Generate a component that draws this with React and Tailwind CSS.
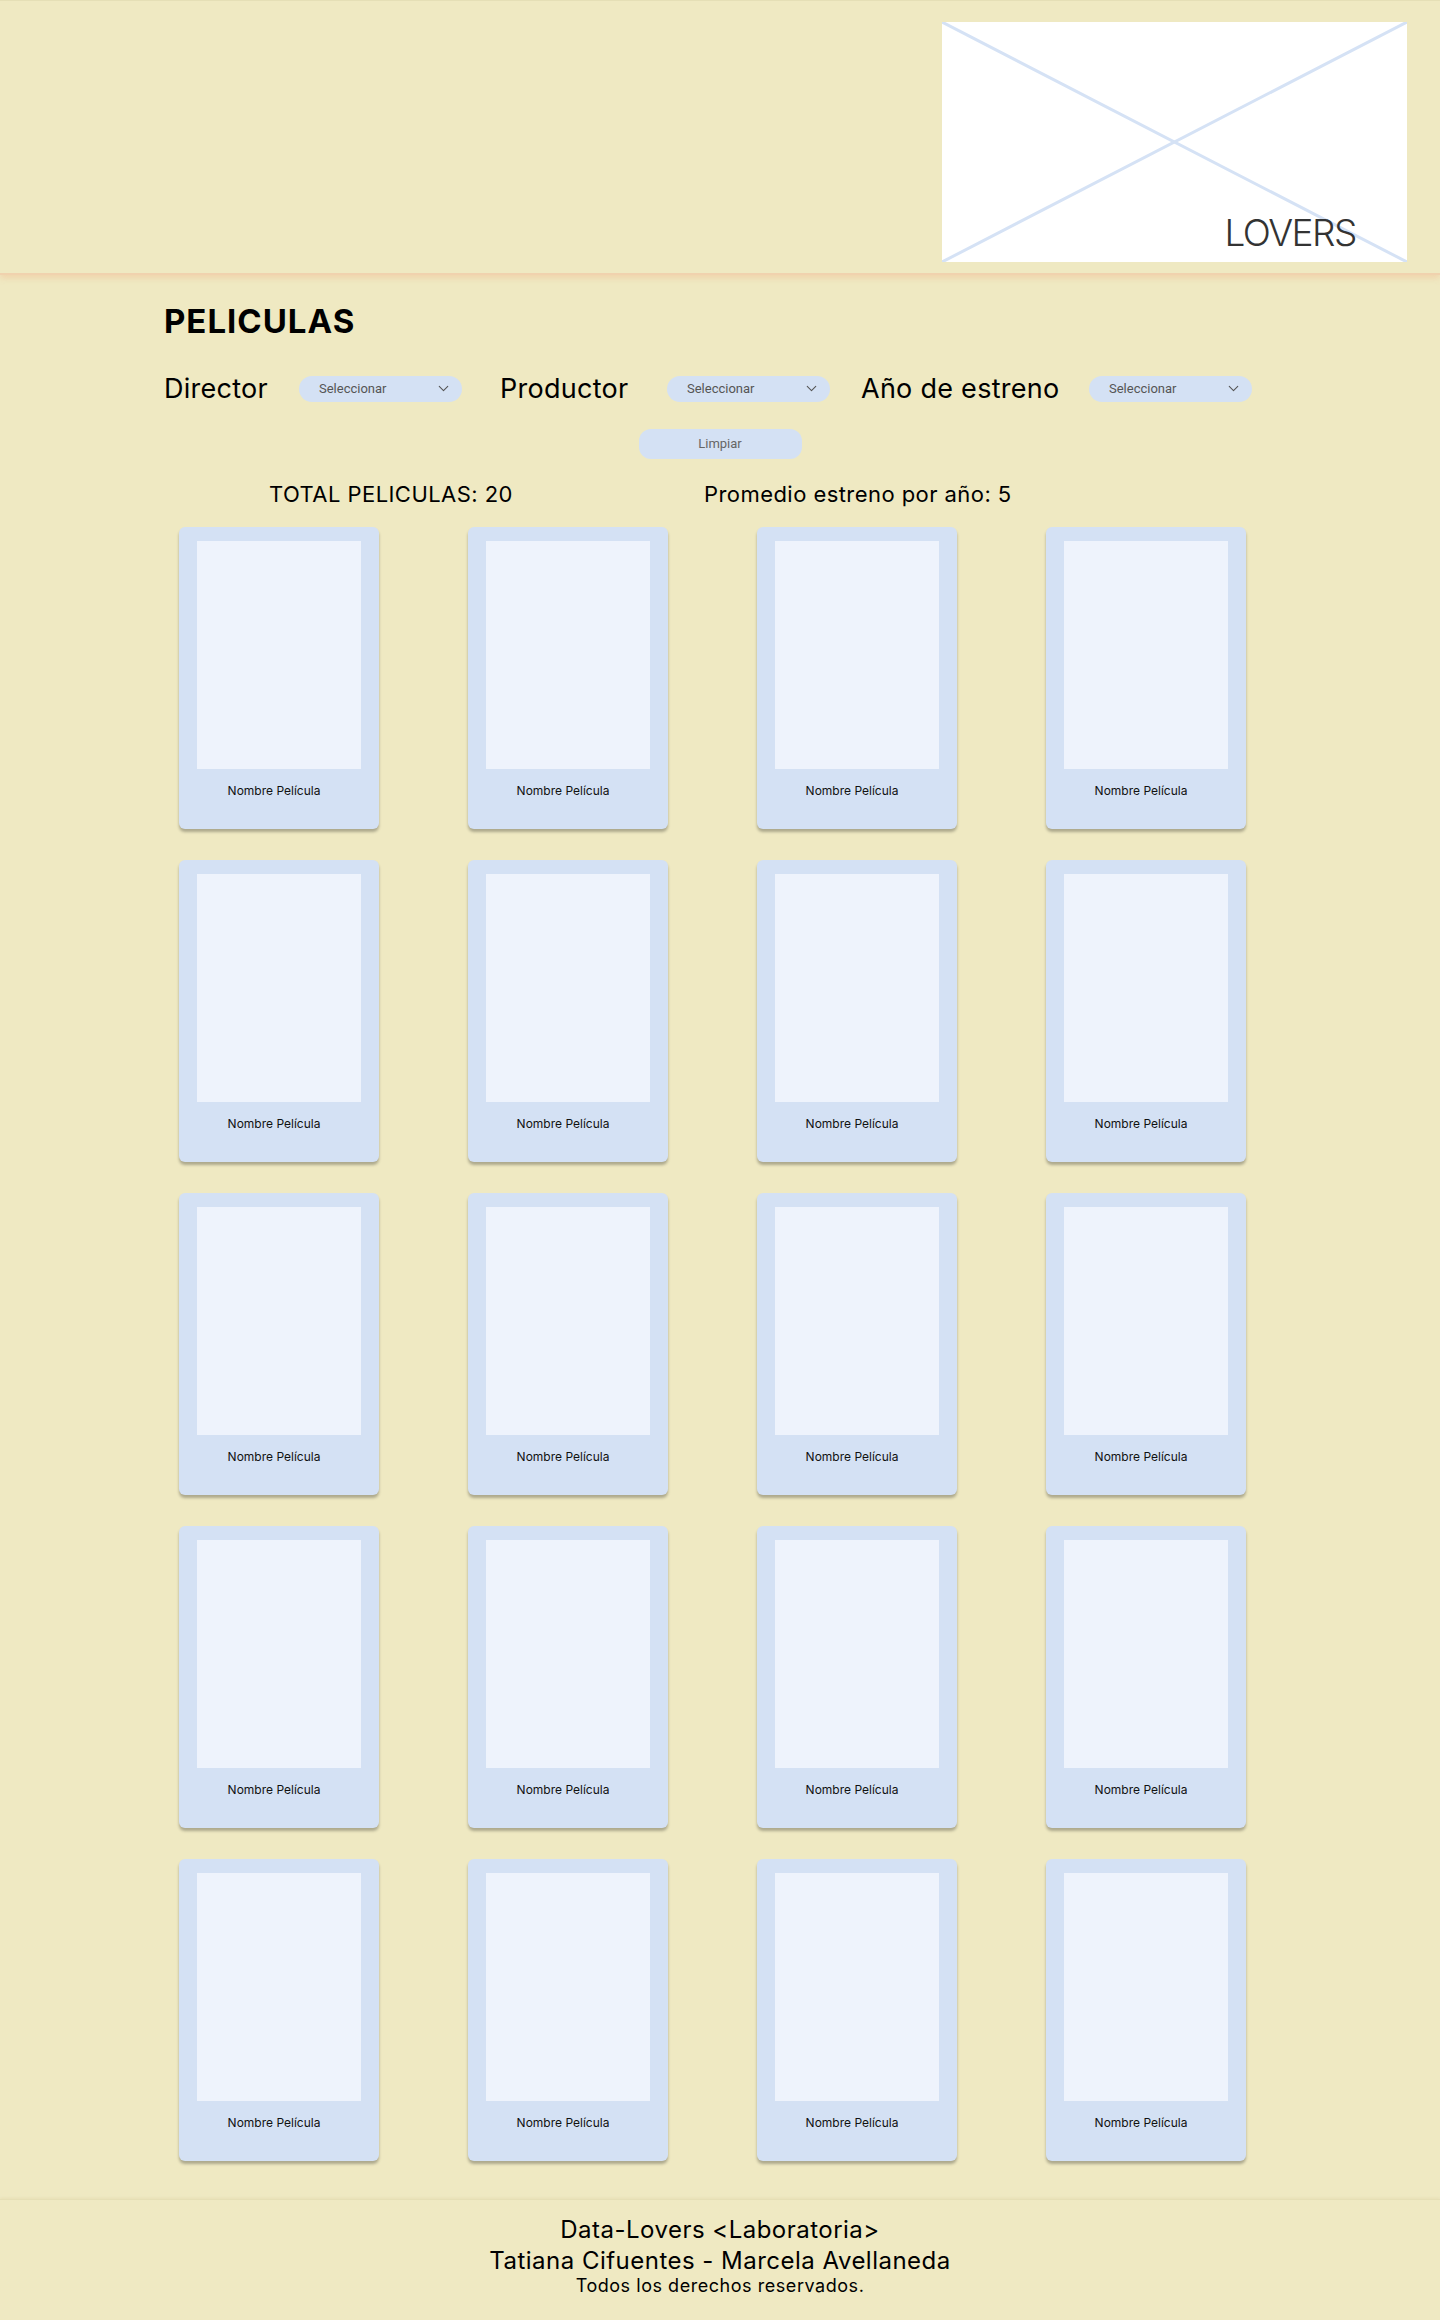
import React from 'react';
import { ChevronDown } from 'lucide-react';

// label widths keep the selects where the mockup has them
const FILTERS = [
  { label: 'Director', width: 'w-[135px]', gap: '' },
  { label: 'Productor', width: 'w-[167px]', gap: 'ml-[38px]' },
  { label: 'Año de estreno', width: 'w-[228px]', gap: 'ml-[31px]' },
];

function Select() {
  return (
    <div className="flex items-center justify-between w-[163px] h-[26px] rounded-full bg-[#d4e1f4] pl-[20px] pr-[10px] font-['Roboto',sans-serif] text-[13px] text-[#555]">
      <span>Seleccionar</span>
      <ChevronDown size={17} strokeWidth={1.5} className="text-[#555]" />
    </div>
  );
}

function MovieCard() {
  return (
    <div className="w-[200px] h-[302px] rounded-md bg-[#d4e1f4] shadow-[0_3px_3px_rgba(0,0,0,0.28)] pt-[14px] px-[18px]">
      <div className="h-[228px] bg-[#eef3fc]" />
      <p className="mt-[14px] text-center text-[12px] leading-4 text-[#111] pr-[10px]">
        Nombre Película
      </p>
    </div>
  );
}

export default function App() {
  const movies = Array.from({ length: 20 });

  return (
    <div className="min-h-[2320px] bg-[#efe9c2] font-['Inter',sans-serif] text-black flex flex-col">
      {/* header */}
      <header className="relative z-10 h-[275px] bg-[#efe9c2] border-t border-[#e5dfb6] border-b-2 border-b-[#f0d2ae] shadow-[0_3px_6px_rgba(240,205,165,0.8)] flex justify-end items-start pt-[21px] pr-[33px]">
        <div className="relative w-[465px] h-[240px] bg-white">
          <svg className="absolute inset-0 w-full h-full" viewBox="0 0 465 240" preserveAspectRatio="none">
            <line x1="0" y1="0" x2="465" y2="240" stroke="#d5e2f5" strokeWidth="3" />
            <line x1="465" y1="0" x2="0" y2="240" stroke="#d5e2f5" strokeWidth="3" />
          </svg>
          <span className="absolute right-[51px] bottom-[11px] text-[37px] leading-none tracking-[-0.04em] font-light text-[#333]">
            LOVERS
          </span>
        </div>
      </header>

      {/* main */}
      <main className="flex-1 pt-[30px]">
        <h1 className="ml-[164px] text-[33px] leading-none font-bold tracking-[0.03em]">PELICULAS</h1>

        <div className="mt-[37px] ml-[164px] flex items-center">
          {FILTERS.map((f) => (
            <div key={f.label} className={`flex items-center ${f.gap}`}>
              <span className={`${f.width} text-[27px] leading-none tracking-[0.01em]`}>{f.label}</span>
              <Select />
            </div>
          ))}
        </div>

        <div className="mt-[27px] flex justify-center">
          <button className="w-[163px] h-[30px] rounded-xl bg-[#d4e1f4] font-['Roboto',sans-serif] text-[13px] text-[#666]">
            Limpiar
          </button>
        </div>

        <div className="mt-[24px] flex text-[22px] leading-none tracking-[0.02em]">
          <p className="ml-[269px] w-[435px]">TOTAL PELICULAS: 20</p>
          <p>Promedio estreno por año: 5</p>
        </div>

        <div className="mt-[22px] ml-[179px] grid grid-cols-[repeat(4,200px)] gap-x-[89px] gap-y-[31px]">
          {movies.map((_, i) => (
            <MovieCard key={i} />
          ))}
        </div>
      </main>

      {/* footer */}
      <footer className="mt-[38px] h-[121px] border-t border-[#e6dfb5] shadow-[0_-1px_2px_rgba(230,222,180,0.8)] pt-[14px] text-center">
        <p className="text-[24px] leading-[31px] tracking-[0.02em]">Data-Lovers &lt;Laboratoria&gt;</p>
        <p className="text-[24px] leading-[31px] tracking-[0.02em]">Tatiana Cifuentes - Marcela Avellaneda</p>
        <p className="text-[18px] leading-[20px] tracking-[0.03em]">Todos los derechos reservados.</p>
      </footer>
    </div>
  );
}
